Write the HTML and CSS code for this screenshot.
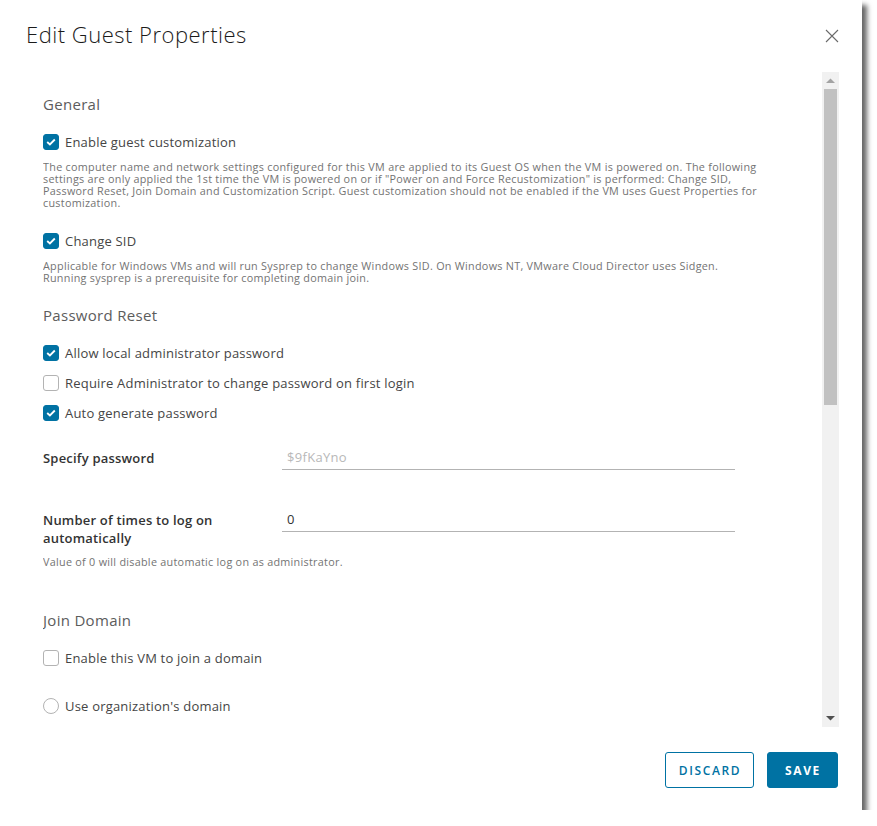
FILE: index.html
```html
<!DOCTYPE html>
<html lang="en">
<head>
<meta charset="utf-8">
<title>Edit Guest Properties</title>
<link rel="stylesheet" href="styles.css">
</head>
<body>
<div class="dialog">
  <div class="header">
    <h1 class="title">Edit Guest Properties</h1>
    <button class="close" aria-label="Close">
      <svg width="14" height="14" viewBox="0 0 14 14"><path d="M1 1 L13 13 M13 1 L1 13" stroke="#6a6a6a" stroke-width="1.1" fill="none"/></svg>
    </button>
  </div>
  <div class="main">
    <div class="content">
      <h2 class="section s-general">General</h2>
      <label class="check r1"><span class="box on"><svg width="10" height="8" viewBox="0 0 10 8"><path d="M1.2 4 L3.9 6.5 L8.8 1.5" stroke="#fff" stroke-width="1.8" fill="none"/></svg></span>Enable guest customization</label>
      <p class="help h1">The computer name and network settings configured for this VM are applied to its Guest OS when the VM is powered on. The following<br>settings are only applied the 1st time the VM is powered on or if "Power on and Force Recustomization" is performed: Change SID,<br>Password Reset, Join Domain and Customization Script. Guest customization should not be enabled if the VM uses Guest Properties for<br>customization.</p>
      <label class="check r2"><span class="box on"><svg width="10" height="8" viewBox="0 0 10 8"><path d="M1.2 4 L3.9 6.5 L8.8 1.5" stroke="#fff" stroke-width="1.8" fill="none"/></svg></span>Change SID</label>
      <p class="help h2">Applicable for Windows VMs and will run Sysprep to change Windows SID. On Windows NT, VMware Cloud Director uses Sidgen.<br>Running sysprep is a prerequisite for completing domain join.</p>
      <h2 class="section s-pass">Password Reset</h2>
      <label class="check r3"><span class="box on"><svg width="10" height="8" viewBox="0 0 10 8"><path d="M1.2 4 L3.9 6.5 L8.8 1.5" stroke="#fff" stroke-width="1.8" fill="none"/></svg></span>Allow local administrator password</label>
      <label class="check r4"><span class="box"></span>Require Administrator to change password on first login</label>
      <label class="check r4"><span class="box on"><svg width="10" height="8" viewBox="0 0 10 8"><path d="M1.2 4 L3.9 6.5 L8.8 1.5" stroke="#fff" stroke-width="1.8" fill="none"/></svg></span>Auto generate password</label>
      <div class="field f1">
        <div class="flabel">Specify password</div>
        <div class="finput placeholder">$9fKaYno</div>
      </div>
      <div class="field f2">
        <div class="flabel">Number of times to log on<br>automatically</div>
        <div class="finput">0</div>
      </div>
      <p class="help h3">Value of 0 will disable automatic log on as administrator.</p>
      <h2 class="section s-join">Join Domain</h2>
      <label class="check r5"><span class="box"></span>Enable this VM to join a domain</label>
      <label class="check r6"><span class="radio"></span>Use organization's domain</label>
    </div>
    <div class="scrollbar">
      <div class="sb-btn"><svg width="9" height="5" viewBox="0 0 9 5"><path d="M0 5 L4.5 0.5 L9 5 Z" fill="#a3a3a3"/></svg></div>
      <div class="sb-track"><div class="sb-thumb"></div></div>
      <div class="sb-btn"><svg width="9" height="5" viewBox="0 0 9 5"><path d="M0 0 L4.5 4.5 L9 0 Z" fill="#505050"/></svg></div>
    </div>
  </div>
  <div class="footer">
    <button class="btn outline">DISCARD</button>
    <button class="btn solid">SAVE</button>
  </div>
</div>
</body>
</html>
```

FILE: styles.css
```css
* { box-sizing: border-box; }
html, body { margin: 0; padding: 0; background: #fff; }
body { font-family: "Open Sans", Lato, sans-serif; color: #454545; }

.dialog {
  width: 862px;
  height: 810px;
  background: #fff;
  box-shadow: 5px 5px 5px rgba(0, 0, 0, 0.6);
  display: flex;
  flex-direction: column;
}

.header {
  height: 72px;
  display: flex;
  justify-content: space-between;
  align-items: flex-start;
  padding: 0 23px 0 26px;
}
.title {
  margin: 19px 0 0;
  font-size: 22px;
  font-weight: 300;
  line-height: 30px;
  letter-spacing: 0.5px;
  color: #1b1b1b;
}
.close {
  border: 0;
  background: none;
  padding: 0;
  margin-top: 29px;
  width: 14px;
  height: 14px;
  display: block;
}
.close svg { display: block; }

.main {
  height: 655px;
  display: flex;
  padding: 0 23px 0 43px;
}
.content {
  flex: 1;
  overflow: hidden;
  display: flex;
  flex-direction: column;
  align-items: flex-start;
}

.section {
  margin: 0;
  font-size: 15px;
  font-weight: 400;
  line-height: 20px;
  letter-spacing: 0.3px;
  color: #5c5c5c;
}
.s-general { margin-top: 22px; }
.s-pass { margin-top: 21px; }
.s-join { margin-top: 42px; }

.check {
  display: flex;
  align-items: center;
  gap: 6px;
  height: 18px;
  font-size: 13px;
  letter-spacing: 0.2px;
  color: #454545;
  white-space: nowrap;
}
.r1 { margin-top: 19px; }
.r2 { margin-top: 23px; }
.r3 { margin-top: 19px; }
.r4 { margin-top: 12px; }
.r5 { margin-top: 19px; }
.r6 { margin-top: 30px; }

.box {
  width: 16px;
  height: 16px;
  border-radius: 3px;
  border: 1px solid #b3b3b3;
  background: #fff;
  display: flex;
  align-items: center;
  justify-content: center;
  flex: none;
}
.box.on { background: #0072a3; border-color: #0072a3; }
.box svg { display: block; }
.radio {
  width: 16px;
  height: 16px;
  border-radius: 50%;
  border: 1px solid #b3b3b3;
  background: #fff;
  flex: none;
}

.help {
  margin: 0;
  font-size: 10.8px;
  line-height: 12px;
  letter-spacing: 0.28px;
  color: #737373;
  white-space: nowrap;
}
.h1 { margin-top: 10px; }
.h2 { margin-top: 10px; }
.h3 { margin-top: 9px; }

.field {
  display: flex;
  align-items: flex-start;
}
.f1 { margin-top: 24px; }
.f2 { margin-top: 38px; }
.flabel {
  width: 239px;
  padding-top: 3px;
  font-size: 13px;
  line-height: 18px;
  font-weight: 600;
  letter-spacing: 0.2px;
  color: #333;
}
.finput {
  width: 453px;
  height: 24px;
  border-bottom: 1px solid #b3b3b3;
  font-size: 13px;
  line-height: 23px;
  letter-spacing: 0.3px;
  padding-left: 5px;
  color: #333;
}
.finput.placeholder { color: #b8b8b8; }

.scrollbar {
  width: 17px;
  background: #f1f1f1;
  display: flex;
  flex-direction: column;
  flex: none;
}
.sb-btn {
  height: 17px;
  display: flex;
  align-items: center;
  justify-content: center;
}
.sb-btn svg { display: block; }
.sb-track {
  flex: 1;
  padding: 0 2px;
}
.sb-thumb {
  height: 316px;
  background: #c1c1c1;
}

.footer {
  flex: 1;
  display: flex;
  justify-content: flex-end;
  align-items: flex-start;
  gap: 13px;
  padding: 25px 24px 0 0;
}
.btn {
  height: 36px;
  border-radius: 3px;
  font-family: "Open Sans", Lato, sans-serif;
  font-size: 12px;
  font-weight: 700;
  letter-spacing: 1.6px;
  padding: 0 0 0 1px;
}
.outline {
  width: 89px;
  background: #fff;
  border: 1px solid #0072a3;
  color: #0072a3;
  font-weight: 600;
}
.solid {
  width: 71px;
  background: #0072a3;
  border: 1px solid #0072a3;
  color: #fff;
}
```
